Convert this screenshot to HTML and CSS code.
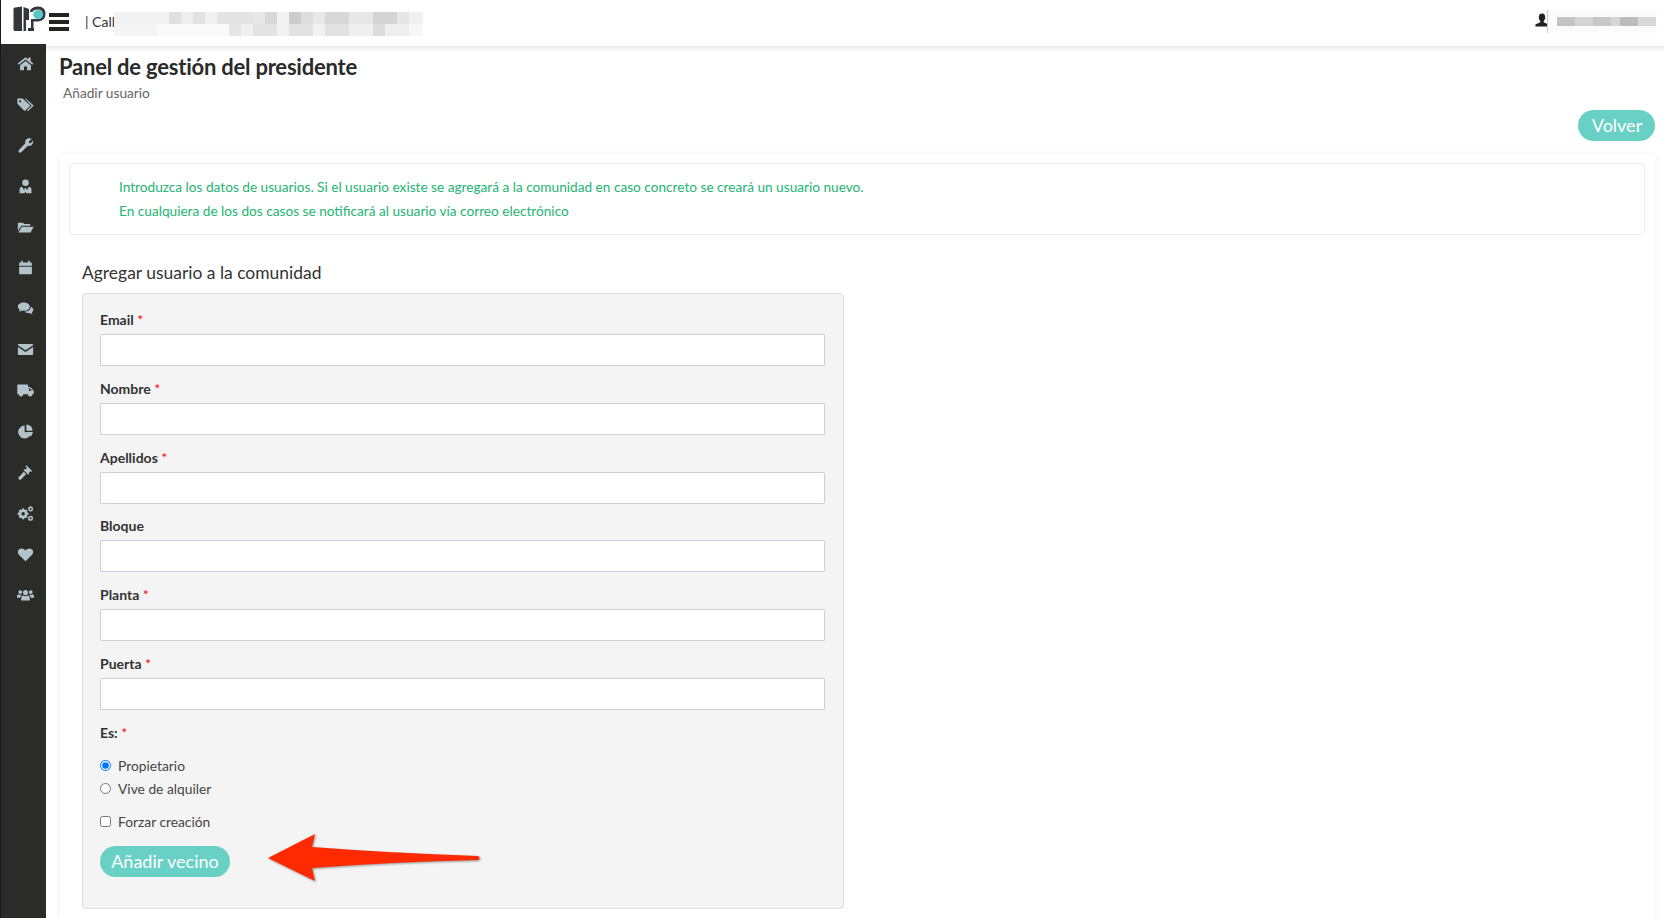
FILE: index.html
```html
<!DOCTYPE html>
<html lang="es">
<head>
<meta charset="utf-8">
<title>Panel de gestión del presidente</title>
<link rel="stylesheet" href="styles.css">
</head>
<body>
<div class="app">
  <header class="topbar">
    <svg class="logo" viewBox="0 0 34 26" aria-hidden="true">
      <path fill="#33363a" d="M2 1.5 L9 0.5 V25 H2 Q0.5 25 0.5 23.5 V3 Q0.5 1.5 2 1.5 Z"/>
      <path fill="#33363a" d="M10.5 1 L16 3 V14 H13 V25 H10.5 Z"/>
      <path fill="#33363a" d="M15 25 V22 H21 V25 Z"/>
      <path fill="#33363a" d="M17 6 Q17 1 25 0.5 Q32.5 0.5 32.5 8 Q32.5 15 25 15.5 H20.5 V25 H18 V13 H24.5 Q29.5 13 29.5 8 Q29.5 3.5 25 3.5 Q20 3.5 19.5 6 Z"/>
      <ellipse cx="25.2" cy="8.6" rx="5" ry="4.6" fill="#55c8c6"/>
    </svg>
    <button class="burger" aria-label="Menú"><span></span><span></span><span></span></button>
    <span class="address">| Calle</span>
    <div class="blur blur-address"></div>
    <div class="account">
      <svg class="account-icon" viewBox="0 0 14 14" aria-hidden="true"><path fill="#222" d="M7 0.5 C9.4 0.5 10.4 2.3 10.2 4.4 C10.1 6 9.4 7.4 8.7 8 V9.2 L13.6 11.4 V13.6 H0.4 V11.4 L5.3 9.2 V8 C4.6 7.4 3.9 6 3.8 4.4 C3.6 2.3 4.6 0.5 7 0.5 Z"/></svg>
      <div class="blur blur-account"></div>
    </div>
  </header>
  <div class="body-row">
    <nav class="sidebar">
      <a class="nav-item"><svg viewBox="0 0 20 20"><path d="M10 2.5 L0.8 10 L2 11.6 L10 5.2 L18 11.6 L19.2 10 L16 7.4 V3 H13.4 V5.2 Z M3.6 12.2 V18 H8.2 V13.4 H11.8 V18 H16.4 V12.2 L10 7 Z"/></svg></a>
      <a class="nav-item"><svg viewBox="0 0 20 20"><path fill-rule="evenodd" d="M0.5 3 H6.5 L15 10.5 Q15.8 11.3 15 12 L9.8 17 Q9 17.7 8.2 17 L0.5 9 Z M3.8 5 A1.3 1.3 0 1 0 3.8 7.6 A1.3 1.3 0 1 0 3.8 5 Z"/><path d="M9 3 H10.2 L19 10.6 Q19.9 11.4 19 12.2 L12.6 18 L11.5 17.1 L17.2 11.4 Z"/></svg></a>
      <a class="nav-item"><svg viewBox="0 0 20 20"><path d="M17.5 2 L14 5.2 L14.3 7 L16 7.4 L19 4.2 Q19.6 8 17 9.8 Q15 11 12.8 10.3 L5 18 Q3.6 19 2.3 17.8 Q1.2 16.4 2.2 15.2 L9.8 7.4 Q9 5 10.4 3.2 Q13 0.8 17.5 2 Z"/></svg></a>
      <a class="nav-item"><svg viewBox="0 0 20 20"><circle cx="10" cy="5.6" r="3.9"/><path d="M3 18 V13 Q3 10.4 6 10.2 L8.4 14.5 L9.2 11.8 H10.8 L11.6 14.5 L14 10.2 Q17 10.4 17 13 V18 H11 L10 15.8 L9 18 Z"/></svg></a>
      <a class="nav-item"><svg viewBox="0 0 20 20"><path d="M1 4.5 H7 L8.5 6 H15.5 V8 H5 L1 14 Z"/><path d="M5.6 9.2 H19.6 L16 16 H1.6 Z"/></svg></a>
      <a class="nav-item"><svg viewBox="0 0 20 20"><path d="M5 2 H7 V4 H13 V2 H15 V4 H16.5 Q17.5 4 17.5 5 V8 H2.5 V5 Q2.5 4 3.5 4 H5 Z M2.5 9 H17.5 V17 Q17.5 18 16.5 18 H3.5 Q2.5 18 2.5 17 Z"/></svg></a>
      <a class="nav-item"><svg viewBox="0 0 20 20"><path d="M8 3 C12 3 15 5 15 7.8 C15 10.6 12 12.6 8 12.6 Q6.8 12.6 5.8 12.4 L2.6 14.2 L3.4 11.4 C1.8 10.5 1 9.2 1 7.8 C1 5 4 3 8 3 Z"/><path d="M16 8 C18 8.8 19.2 10 19.2 11.6 C19.2 12.8 18.4 13.8 17.4 14.6 L18.2 17 L15 15.4 Q13 15.8 11 15 L8.8 13.8 C13 13.8 16.4 11.6 16 8 Z"/></svg></a>
      <a class="nav-item"><svg viewBox="0 0 20 20"><path d="M1 4.6 Q1 3.5 2.2 3.5 H17.8 Q19 3.5 19 4.6 V5 L10 11 L1 5 Z M1 7 L10 13 L19 7 V15.4 Q19 16.5 17.8 16.5 H2.2 Q1 16.5 1 15.4 Z"/></svg></a>
      <a class="nav-item"><svg viewBox="0 0 20 20"><path fill-rule="evenodd" d="M0.3 4 Q0.3 3 1.3 3 H12 Q13 3 13 4 V6 H15.5 L19.6 10.2 V14.4 H18 A2.6 2.6 0 0 1 12.8 14.4 H7.4 A2.6 2.6 0 0 1 2.2 14.4 H1.3 Q0.3 14.4 0.3 13.4 Z M14 7.4 V10.4 H17.6 L15 7.4 Z"/><circle cx="4.8" cy="15" r="1.4"/><circle cx="15.4" cy="15" r="1.4"/></svg></a>
      <a class="nav-item"><svg viewBox="0 0 20 20"><path d="M9 3 A7.6 7.6 0 1 0 16.6 10.8 H9 Z"/><path d="M11 1.8 A7.6 7.6 0 0 1 18.4 9 H11 Z"/><path d="M11 10.6 H18.6 A7.6 7.6 0 0 1 16.4 15.8 Z"/></svg></a>
      <a class="nav-item"><svg viewBox="0 0 20 20"><path d="M11 1.5 L17.8 8.2 L16.6 9.4 L15.6 8.6 L13.8 10.4 L14.4 11.4 L13.2 12.6 L7.8 7.2 L9 6 L10 6.6 L11.8 4.8 L10 3 Z"/><path d="M8 9 L10.8 11.8 L4.4 18.4 Q3.4 19 2.2 18 Q1.2 16.8 1.8 15.8 Z"/></svg></a>
      <a class="nav-item"><svg viewBox="0 0 20 20"><path fill-rule="evenodd" d="M6 4 H8.4 L8.9 6 L10.7 5.2 L12.4 6.9 L11.4 8.6 L13.6 9.2 V11.6 L11.4 12.2 L12.4 14 L10.7 15.6 L8.9 14.6 L8.4 16.8 H6 L5.4 14.6 L3.7 15.6 L2 14 L3 12.2 L0.8 11.6 V9.2 L3 8.6 L2 6.9 L3.7 5.2 L5.4 6 Z M7.2 8.3 A2.1 2.1 0 1 0 7.2 12.5 A2.1 2.1 0 1 0 7.2 8.3 Z"/><path fill-rule="evenodd" d="M16 1.6 A3 3 0 1 1 15.9 7.6 A3 3 0 1 1 16 1.6 Z M16 3.4 A1.2 1.2 0 1 0 16 5.8 A1.2 1.2 0 1 0 16 3.4 Z"/><path fill-rule="evenodd" d="M16 12.6 A3 3 0 1 1 15.9 18.6 A3 3 0 1 1 16 12.6 Z M16 14.4 A1.2 1.2 0 1 0 16 16.8 A1.2 1.2 0 1 0 16 14.4 Z"/></svg></a>
      <a class="nav-item"><svg viewBox="0 0 20 20"><path d="M10 18 L2.2 10.2 C0.2 8 0.8 4.8 3 3.6 C5.4 2.4 8.2 3 10 5.4 C11.8 3 14.6 2.4 17 3.6 C19.2 4.8 19.8 8 17.8 10.2 Z"/></svg></a>
      <a class="nav-item"><svg viewBox="0 0 20 20"><circle cx="10" cy="6.6" r="3"/><circle cx="3.8" cy="6" r="2.2"/><circle cx="16.2" cy="6" r="2.2"/><path d="M5 16 V13 Q5 10.2 7.4 10 Q10 11.6 12.6 10 Q15 10.2 15 13 V16 Z"/><path d="M0 12.6 V10.4 Q0 8.8 1.6 8.8 Q3.2 9.8 5 8.8 L5.8 9.4 Q4 10.4 3.8 12.6 Z"/><path d="M20 12.6 V10.4 Q20 8.8 18.4 8.8 Q16.8 9.8 15 8.8 L14.2 9.4 Q16 10.4 16.2 12.6 Z"/></svg></a>
    </nav>
    <main class="content">
      <h1 class="page-title">Panel de gestión del presidente</h1>
      <p class="page-sub">Añadir usuario</p>
      <div class="actions"><button class="pill pill-back">Volver</button></div>
      <section class="card">
        <div class="notice">
          <p>Introduzca los datos de usuarios. Si el usuario existe se agregará a la comunidad en caso concreto se creará un usuario nuevo.</p>
          <p>En cualquiera de los dos casos se notificará al usuario vía correo electrónico</p>
        </div>
        <div class="form-area">
          <h2 class="form-title">Agregar usuario a la comunidad</h2>
          <form class="well">
            <div class="field"><label>Email <em>*</em></label><input type="text"></div>
            <div class="field"><label>Nombre <em>*</em></label><input type="text"></div>
            <div class="field"><label>Apellidos <em>*</em></label><input type="text"></div>
            <div class="field"><label>Bloque</label><input type="text"></div>
            <div class="field"><label>Planta <em>*</em></label><input type="text"></div>
            <div class="field"><label>Puerta <em>*</em></label><input type="text"></div>
            <div class="group-label"><label>Es: <em>*</em></label></div>
            <div class="options">
              <label class="check"><input type="radio" name="es" checked>Propietario</label>
              <label class="check"><input type="radio" name="es">Vive de alquiler</label>
            </div>
            <label class="check check-force"><input type="checkbox">Forzar creación</label>
            <button type="button" class="pill pill-add">Añadir vecino</button>
          </form>
        </div>
      </section>
    </main>
  </div>
  <svg class="arrow" viewBox="0 0 240 60" aria-hidden="true">
    <path d="M8 27 L55 3 L52 16 Q130 22 218 25 Q221 27 218 29 Q130 31 52 37 L55 50 Z"/>
  </svg>
</div>
</body>
</html>
```

FILE: styles.css
```css
* { box-sizing: border-box; }
html, body { margin: 0; height: 100%; overflow: hidden; background: #fff; }
body { font-family: "Lato", "Noto Sans", sans-serif; color: #333; font-size: 14px; }
.app { position: relative; height: 918px; display: flex; flex-direction: column; border-left: 1px solid #141a2e; }

.topbar { height: 46px; flex: none; display: flex; align-items: center; background: #fff; box-shadow: 0 2px 5px rgba(0,0,0,.12); position: relative; z-index: 2; padding: 0 0 2px 12px; }
.logo { width: 34px; height: 26px; margin-top: -6px; flex: none; }
.burger { width: 20px; height: 18px; margin-left: 2px; padding: 0; border: 0; background: none; display: flex; flex-direction: column; justify-content: space-between; margin-top: -1px; }
.burger span { display: block; height: 4px; background: #22251f; }
.address { margin-left: 16px; font-size: 14px; color: #333; margin-top: -2px; }
.blur { position: absolute; }
.blur-address { left: 113px; top: 12px; width: 309px; height: 24px;
  background:
    linear-gradient(90deg, #f2f2f2 0 55px, #e0e0e0 55px 67px, #eee 67px 79px, #e2e2e2 79px 91px, #f0f0f0 91px 103px, #e4e4e4 103px 139px, #e8e8e8 139px 151px, #d8d8d8 151px 163px, #f2f2f2 163px 175px, #ccc 175px 187px, #ddd 187px 199px, #e8e8e8 199px 211px, #d8d8d8 211px 235px, #e8e8e8 235px 259px, #d4d4d4 259px 283px, #e6e6e6 283px 295px, #f0f0f0 295px 309px) top / 100% 12px no-repeat,
    linear-gradient(90deg, #f5f5f5 0 43px, #fafafa 43px 115px, #e6e6e6 115px 127px, #f0f0f0 127px 139px, #e4e4e4 139px 163px, #f2f2f2 163px 175px, #e2e2e2 175px 199px, #f2f2f2 199px 211px, #e2e2e2 211px 235px, #efefef 235px 259px, #dcdcdc 259px 271px, #eee 271px 295px, #f6f6f6 295px 309px) bottom / 100% 12px no-repeat; }
.account { margin-left: auto; position: relative; width: 130px; height: 100%; }
.account-icon { position: absolute; left: 0; top: 13px; width: 14px; height: 14px; }
.blur-account { left: 12px; top: 10px; width: 110px; height: 23px; border-left: 1px solid #ccc;
  background:
    linear-gradient(90deg, #fff 0 9px, #c4c4c4 9px 27px, #d4d4d4 27px 45px, #c8c8c8 45px 63px, #d6d6d6 63px 72px, #bcbcbc 72px 90px, #d8d8d8 90px 108px, #fff 108px) center / 100% 9px no-repeat,
    #fbfbfb; }

.body-row { flex: 1; display: flex; min-height: 0; }
.sidebar { width: 45px; flex: none; margin-top: -2px; position: relative; z-index: 3; background: #2b2c28; display: flex; flex-direction: column; }
.nav-item { height: 40.9px; flex: none; display: flex; align-items: center; justify-content: center; padding-left: 3px; padding-bottom: 2px; }
.nav-item svg { width: 17px; height: 17px; fill: #b3c3cb; }

.content { flex: 1; min-width: 0; padding: 0 10px 0 13px; }
.page-title { margin: 6px 0 0; font-size: 22px; letter-spacing: -.22px; line-height: 30px; font-weight: 700; color: #2a2a2a; }
.page-sub { margin: 1px 0 0 4px; font-size: 13.7px; line-height: 20px; color: #666; }
.actions { display: flex; justify-content: flex-end; margin-top: 7px; }
.pill { border: 0; background: #69d0c6; color: #fff; font-family: inherit; border-radius: 16px; height: 31px; font-size: 18px; padding: 0 0 2px; }
.pill-back { width: 77px; padding-left: 1px; }
.pill-add { width: 130px; display: block; margin-top: 13px; padding-bottom: 0; }

.card { margin-top: 13px; margin-left: 1px; background: #fff; border-radius: 4px; box-shadow: 0 0 6px rgba(0,0,0,.07); padding: 9px 10px 0 9px; height: 780px; }
.notice { height: 72px; border: 1px solid #eee; border-radius: 3px; padding: 11px 0 0 49px; color: #22b573; font-size: 13.65px; }
.notice p { margin: 0; line-height: 24px; }
.form-area { padding-left: 13px; }
.form-title { margin: 26px 0 0; font-size: 17.45px; line-height: 24px; font-weight: 400; color: #333; }
.well { width: 762px; height: 616px; margin-top: 8px; background: #f4f4f4; border: 1px solid #ddd; border-radius: 4px; padding: 16px 18px 0 17px; }
.field { height: 68.8px; display: flex; flex-direction: column; }
.field label, .group-label label { display: block; font-weight: 700; font-size: 14px; line-height: 20px; color: #333; }
em { font-style: normal; color: #f00; font-weight: 400; }
.field input { margin-top: 4px; height: 32px; width: 100%; border: 1px solid #ccd0dd; background: #fff; border-radius: 1px; padding: 0 8px; }
.group-label { height: 23px; margin-top: 0; }
.options { margin-top: 8px; }
.check { display: flex; align-items: center; height: 23px; font-size: 13.8px; color: #444; }
.check input { margin: 0 7px 0 0; width: 11px; height: 11px; flex: none; }
.check-force { margin-top: 10px; }

.arrow { position: absolute; left: 259px; top: 831px; width: 240px; height: 60px; z-index: 3; fill: #ff2a00; filter: drop-shadow(1px 1px 1px rgba(0,0,0,.4)); }
```
